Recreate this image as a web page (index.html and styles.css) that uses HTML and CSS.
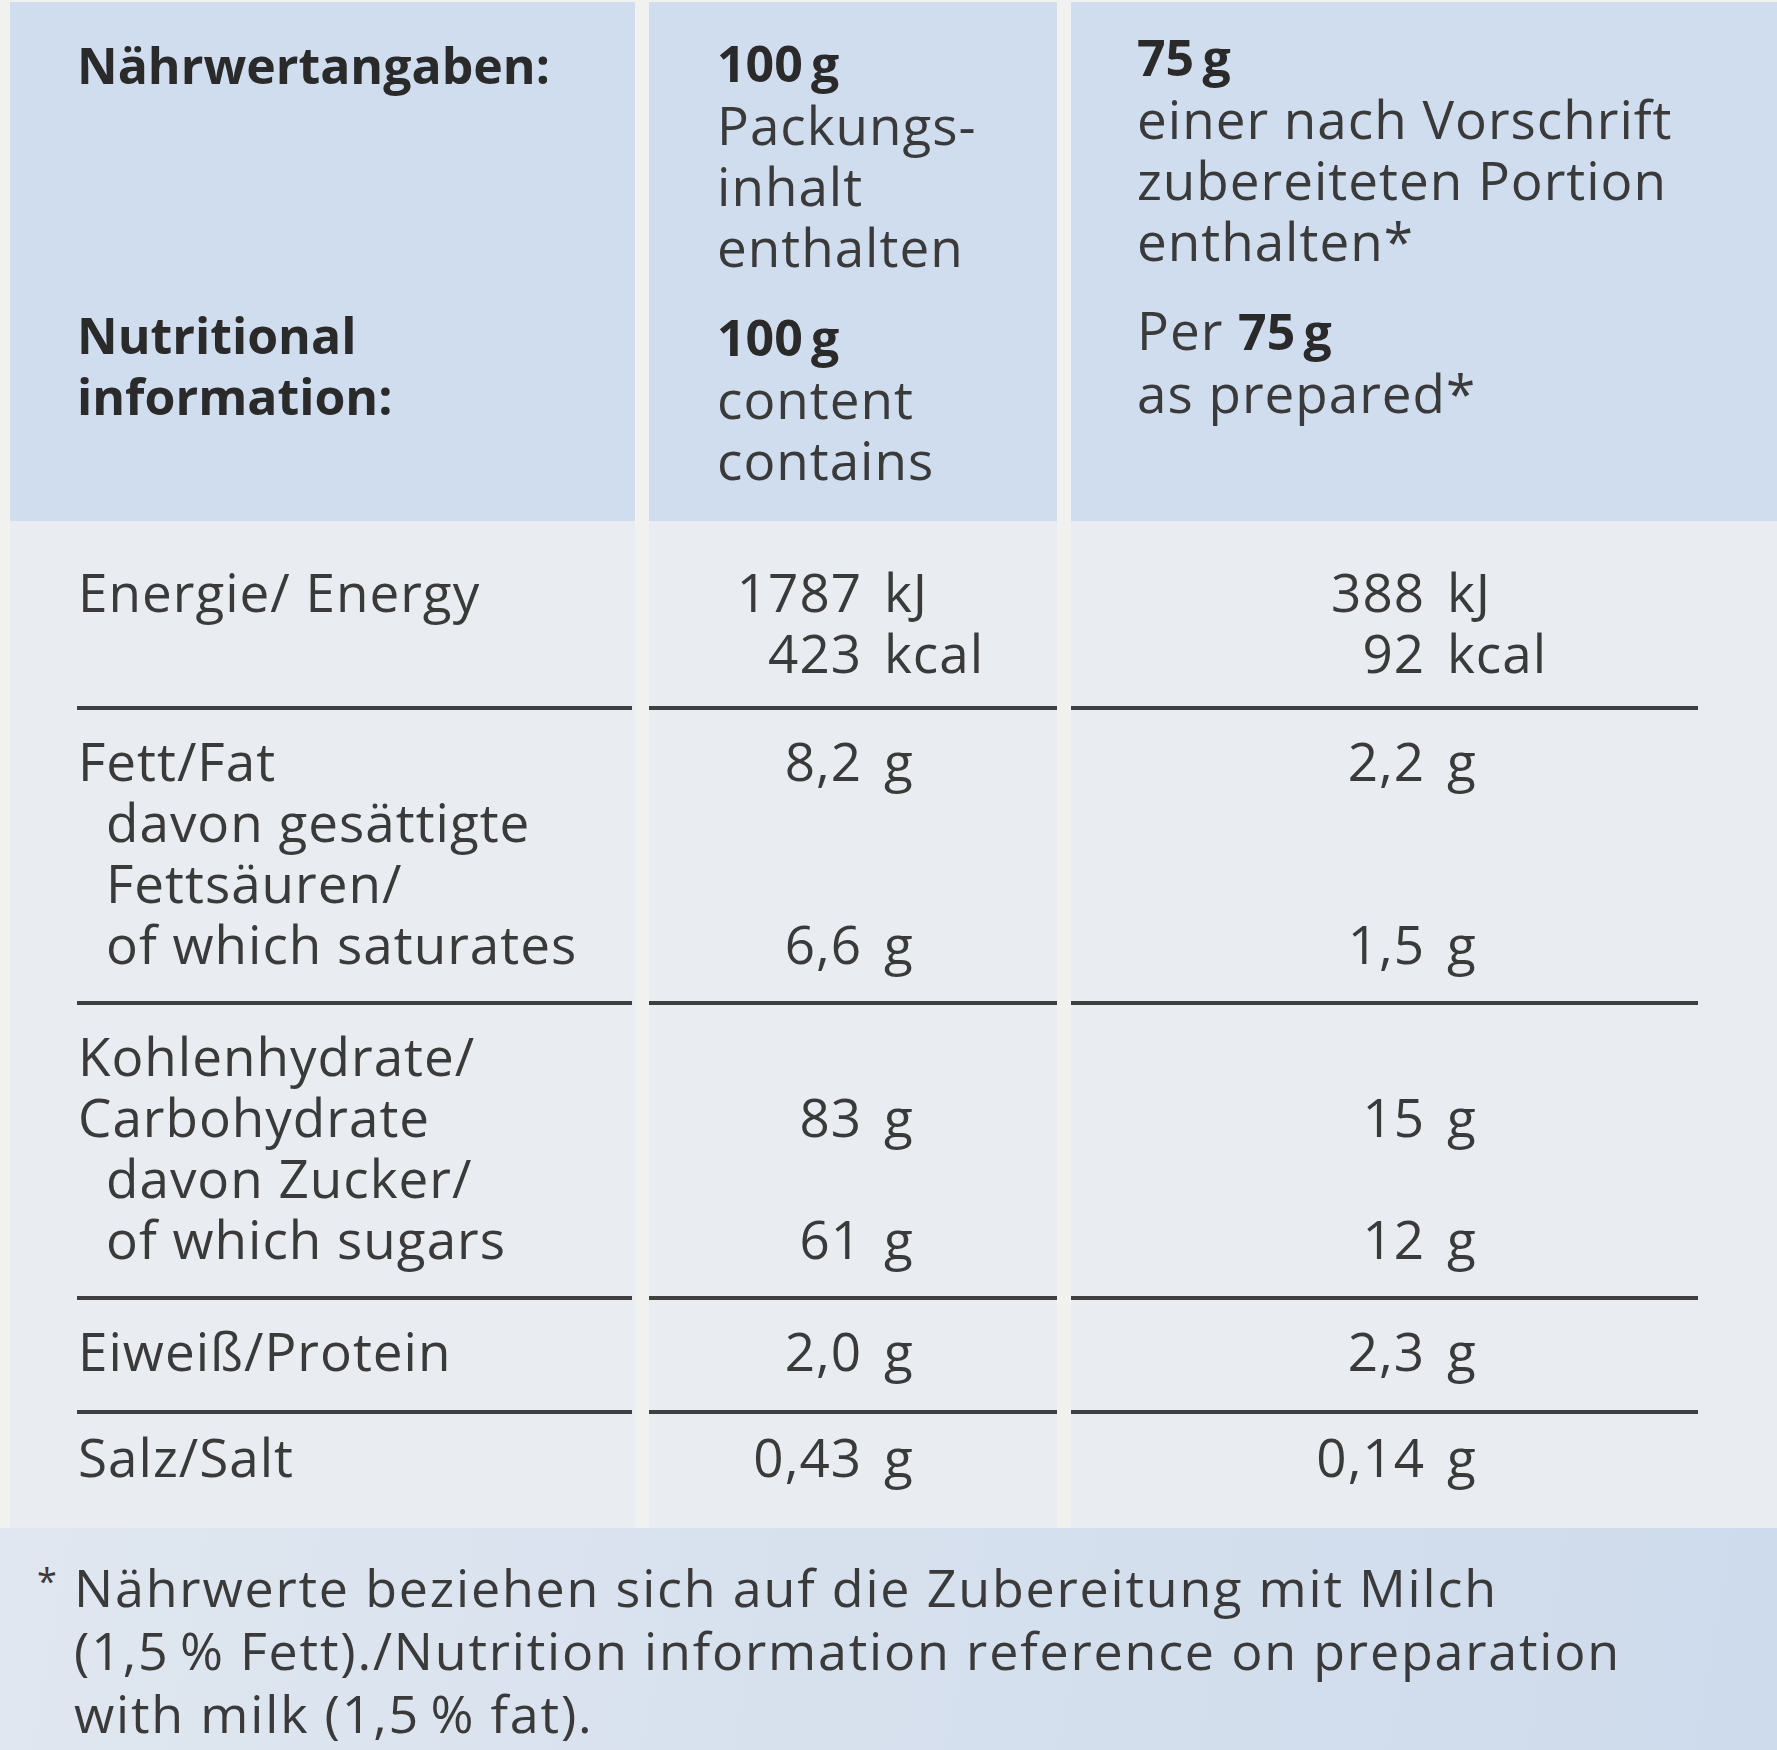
FILE: index.html
```html
<!DOCTYPE html>
<html lang="de">
<head>
<meta charset="utf-8">
<title>Nährwertangaben</title>
<link rel="stylesheet" href="styles.css">
</head>
<body>
<main class="label">
  <section class="table">
    <div class="cell head c1">
      <p class="b">Nährwertangaben:</p>
      <p class="b second1">Nutritional<br>information:</p>
    </div>
    <div class="cell head c2">
      <p><b>100&#8201;g</b><br>Packungs-<br>inhalt<br>enthalten</p>
      <p class="second"><b>100&#8201;g</b><br>content<br>contains</p>
    </div>
    <div class="cell head c3">
      <p><b>75&#8201;g</b><br>einer nach Vorschrift<br>zubereiteten Portion<br>enthalten*</p>
      <p class="second">Per <b>75&#8201;g</b><br>as prepared*</p>
    </div>

    <div class="cell c1"><div class="in r-energy"><p>Energie/ Energy</p></div></div>
    <div class="cell c2"><div class="in r-energy">
      <div class="val"><span class="num">1787</span><span class="u">kJ</span></div>
      <div class="val"><span class="num">423</span><span class="u">kcal</span></div>
    </div></div>
    <div class="cell c3"><div class="in r-energy">
      <div class="val"><span class="num">388</span><span class="u">kJ</span></div>
      <div class="val"><span class="num">92</span><span class="u">kcal</span></div>
    </div></div>

    <div class="cell c1"><div class="in r-multi"><p>Fett/Fat</p><p class="ind">davon gesättigte<br>Fettsäuren/<br>of which saturates</p></div></div>
    <div class="cell c2"><div class="in r-multi">
      <div class="val"><span class="num">8,2</span><span class="u">g</span></div>
      <div class="val"></div><div class="val"></div>
      <div class="val"><span class="num">6,6</span><span class="u">g</span></div>
    </div></div>
    <div class="cell c3"><div class="in r-multi">
      <div class="val"><span class="num">2,2</span><span class="u">g</span></div>
      <div class="val"></div><div class="val"></div>
      <div class="val"><span class="num">1,5</span><span class="u">g</span></div>
    </div></div>

    <div class="cell c1"><div class="in r-multi"><p>Kohlenhydrate/<br>Carbohydrate</p><p class="ind">davon Zucker/<br>of which sugars</p></div></div>
    <div class="cell c2"><div class="in r-multi">
      <div class="val"></div>
      <div class="val"><span class="num">83</span><span class="u">g</span></div>
      <div class="val"></div>
      <div class="val"><span class="num">61</span><span class="u">g</span></div>
    </div></div>
    <div class="cell c3"><div class="in r-multi">
      <div class="val"></div>
      <div class="val"><span class="num">15</span><span class="u">g</span></div>
      <div class="val"></div>
      <div class="val"><span class="num">12</span><span class="u">g</span></div>
    </div></div>

    <div class="cell c1"><div class="in r-protein"><p>Eiweiß/Protein</p></div></div>
    <div class="cell c2"><div class="in r-protein">
      <div class="val"><span class="num">2,0</span><span class="u">g</span></div>
    </div></div>
    <div class="cell c3"><div class="in r-protein">
      <div class="val"><span class="num">2,3</span><span class="u">g</span></div>
    </div></div>

    <div class="cell c1"><div class="in r-salt"><p>Salz/Salt</p></div></div>
    <div class="cell c2"><div class="in r-salt">
      <div class="val"><span class="num">0,43</span><span class="u">g</span></div>
    </div></div>
    <div class="cell c3"><div class="in r-salt">
      <div class="val"><span class="num">0,14</span><span class="u">g</span></div>
    </div></div>
  </section>

  <footer class="note">
    <span class="ast">*</span>
    <p>Nährwerte beziehen sich auf die Zubereitung mit Milch<br>(1,5&#8201;% Fett)./Nutrition information reference on preparation<br>with milk (1,5&#8201;% fat).</p>
  </footer>
</main>
</body>
</html>
```

FILE: styles.css
```css
* {
  box-sizing: border-box;
  margin: 0;
  padding: 0;
}

html,
body {
  width: 1777px;
  height: 1750px;
  overflow: hidden;
}

body {
  background: #f1f2f0;
  font-family: "Open Sans", "Noto Sans", sans-serif;
  font-size: 53px;
  line-height: 61px;
  letter-spacing: 1px;
  color: #3a3a3a;
}

.label {
  display: flex;
  flex-direction: column;
  height: 1750px;
}

.table {
  display: grid;
  grid-template-columns: 625px 408px 1fr;
  grid-template-rows: 519px repeat(5, auto);
  column-gap: 14px;
  padding-left: 10px;
  padding-top: 2px;
}

.cell {
  background: #e9ecf0;
}

.cell.head {
  background: #d0ddee;
  white-space: nowrap;
}

.head.c1 {
  padding-top: 33px;
  padding-left: 75px;
}

.head.c2 {
  padding-top: 29px;
  padding-left: 68px;
}

.head.c3 {
  padding-top: 23px;
  padding-left: 66px;
}

b,
.b {
  font-weight: 700;
  font-size: 50px;
  color: #2a2a2a;
  letter-spacing: 0;
}

.second {
  margin-top: 28px;
}

.second1 {
  margin-top: 209px;
}

/* body cells */
.cell.c1 {
  padding-left: 67px;
  padding-right: 3px;
}

.cell.c3 {
  padding-right: 79px;
}

.cell.head.c1,
.cell.head.c3 {
  padding-right: 0;
}

.in {
  border-bottom: 4px solid #3f3f3f;
}

.r-energy {
  padding-top: 40px;
  padding-bottom: 23px;
  height: 189px;
}

.r-multi {
  padding-top: 20px;
  padding-bottom: 27px;
  height: 295px;
}

.r-protein {
  padding-top: 20px;
  padding-bottom: 29px;
  height: 114px;
}

.r-salt {
  padding-top: 12px;
  border-bottom: none;
  height: 114px;
}

.c1 .in {
  padding-left: 1px;
}

.ind {
  padding-left: 28px;
}

.val {
  display: flex;
  height: 61px;
}

.c2 .num {
  width: 213px;
  text-align: right;
}

.c3 .num {
  width: 354px;
  text-align: right;
}

.u {
  margin-left: 22px;
}

/* footnote */
.note {
  flex: 1;
  display: flex;
  align-items: flex-start;
  padding: 27px 0 0 37px;
  background: linear-gradient(100deg, #e0e7f0 0%, #d7e1ee 45%, #cedbec 100%);
}

.ast {
  width: 37px;
  font-size: 36px;
  line-height: 40px;
  padding-top: 6px;
}

.note p {
  font-size: 52px;
  line-height: 63px;
  letter-spacing: 1.8px;
  white-space: nowrap;
}
```
